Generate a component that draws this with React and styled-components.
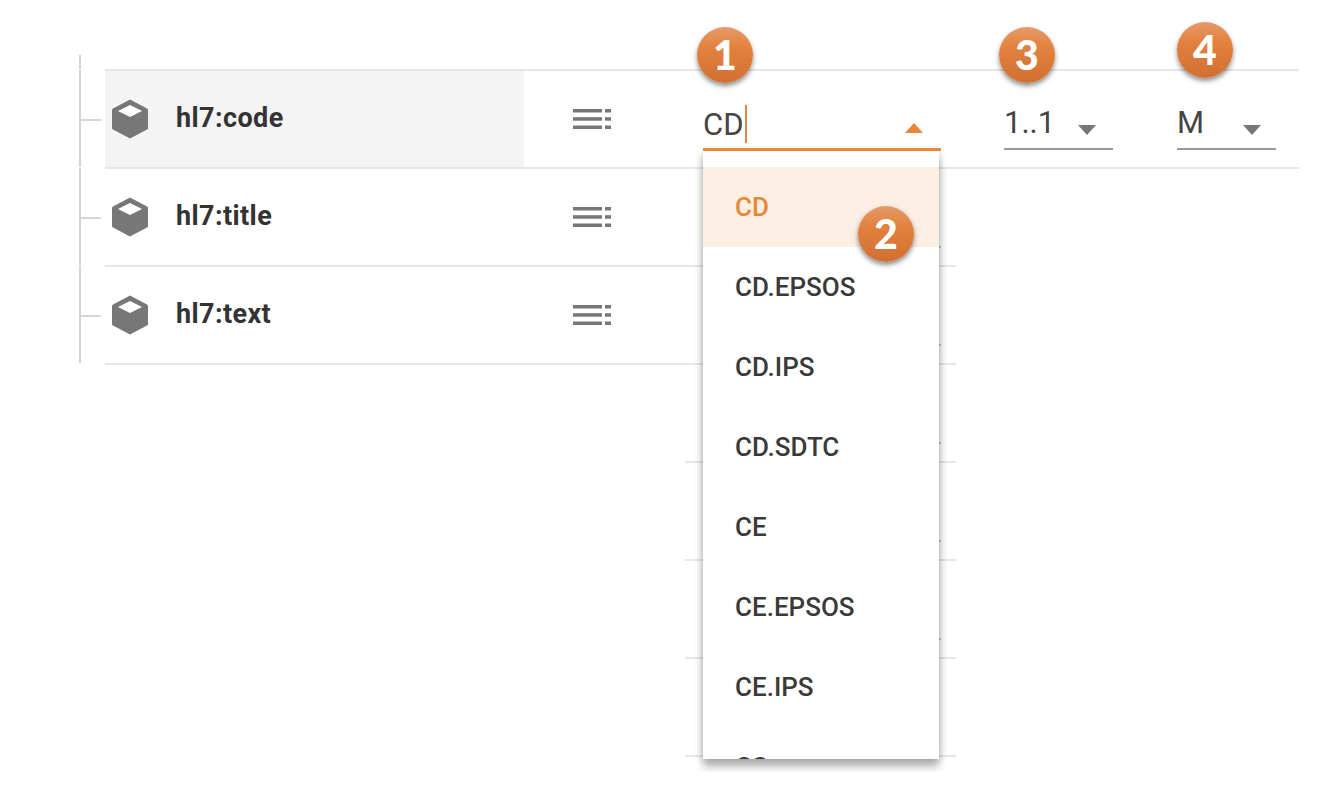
import React from 'react';
import styled, { createGlobalStyle } from 'styled-components';

const orange = '#e8873a';

const GlobalStyle = createGlobalStyle`
    html, body {
        margin: 0;
        background: #fff;
        font-family: Roboto, "Liberation Sans", sans-serif;
    }
`
const Tree = styled.div`
    display: flex;
    padding: 55px 0 0 79px;
    height: 737px;
    overflow: hidden;
`
const Rail = styled.div`
    display: flex;
    flex-direction: column;
    gap: 1px;
    width: 26px;
    flex: none;
`
const RailPiece = styled.div`
    height: ${props => props.$height}px;
    border-left: 2px solid #d3d3d3;
    display: flex;
    align-items: center;
`
const Tick = styled.div`
    width: 20px;
    height: 2px;
    margin-top: 2px;
    background: #d6d6d6;
`
const Rows = styled.div`
    margin-top: 14px;
    display: flex;
    flex-direction: column;
    flex: 1;
`
const Row = styled.div`
    position: relative;
    display: flex;
    height: 96px;
    width: ${props => props.$wide ? 1194 : 851}px;
    border-bottom: 2px solid #e6e6e6;
    border-top: ${props => props.$first ? '2px solid #e6e6e6' : 'none'};
`
const GhostRow = styled.div`
    position: relative;
    height: 96px;
    width: 271px;
    margin-left: 580px;
    border-bottom: 2px solid #e6e6e6;
`
const SideTick = styled.div`
    position: absolute;
    left: ${props => props.$left}px;
    bottom: 17px;
    width: 2px;
    height: 2px;
    background: #c4c4c4;
`
const NameCell = styled.div`
    width: 413px;
    padding-left: 6px;
    display: flex;
    align-items: center;
    gap: 27px;
    background: ${props => props.$active ? '#f4f4f4' : 'transparent'};
`
const Name = styled.span`
    font-size: 27px;
    font-weight: 700;
    letter-spacing: .4px;
    color: #333;
    position: relative;
    top: -1px;
`
const MenuButton = styled.div`
    margin-left: 49px;
    width: 38px;
    display: flex;
    align-items: center;
`
const Field = styled.div`
    position: relative;
    z-index: 2;
    box-sizing: border-box;
    height: ${props => props.$open ? 47 : 46}px;
    width: ${props => props.$width}px;
    margin: 33px 0 0 ${props => props.$gap}px;
    padding-right: ${props => props.$pad}px;
    border-bottom: ${props => props.$open ? `3px solid ${orange}` : '2px solid #9a9a9a'};
    display: flex;
    align-items: center;
    justify-content: space-between;
`
const Value = styled.div`
    display: flex;
    align-items: center;
    font-size: 31px;
    color: #444;
    position: relative;
    top: ${props => props.$top}px;
`
const Caret = styled.span`
    width: 2px;
    height: 38px;
    margin-left: 1px;
    background: ${orange};
`
const Arrow = styled.span`
    width: 0;
    height: 0;
    border-left: 9.5px solid transparent;
    border-right: 9.5px solid transparent;
    border-top: ${props => props.$up ? 'none' : '10px solid #777'};
    border-bottom: ${props => props.$up ? `10px solid ${orange}` : 'none'};
    position: relative;
    top: ${props => props.$up ? 2 : 4}px;
`
const Badge = styled.div`
    position: absolute;
    left: ${props => props.$left}px;
    top: ${props => props.$top}px;
    width: 56px;
    height: 56px;
    border-radius: 50%;
    background: linear-gradient(180deg, #e69a6a 0%, #e3823f 35%, #d06f31 100%);
    box-shadow: 0 3px 5px rgba(0, 0, 0, .45);
    color: #fff;
    font-family: Lato, "Open Sans", sans-serif;
    font-weight: 900;
    font-size: 41px;
    line-height: 56px;
    text-align: center;
    z-index: 3;
`
const Menu = styled.div`
    position: absolute;
    left: 0;
    top: calc(100% + 3px);
    width: 236px;
    height: 608px;
    padding-top: 16px;
    box-sizing: border-box;
    overflow: hidden;
    background: #fff;
    box-shadow: 0 0 8px rgba(0, 0, 0, .18), 0 8px 8px rgba(0, 0, 0, .28);
    clip-path: inset(0 -12px -13px -12px);
`
const MenuItem = styled.div`
    position: relative;
    box-sizing: border-box;
    height: 80px;
    padding: 0 0 1px 32px;
    display: flex;
    align-items: center;
    font-size: 26px;
    font-weight: 500;
    color: ${props => props.$selected ? orange : '#3a3a3a'};
    background: ${props => props.$selected ? '#fbefe4' : 'transparent'};
`

const CubeIcon = () => (
    <svg width="38" height="40" viewBox="0 0 38 40">
        <path d="M19 0.5 L36 9.5 Q37 10 37 11 V29 Q37 30 36 30.5 L19 39.5 L2 30.5 Q1 30 1 29 V11 Q1 10 2 9.5 Z" fill="#777" />
        <path d="M19 6 L31 12 L19 18 L7 12 Z" fill="#fff" />
    </svg>
)

const ListIcon = () => (
    <svg width="38" height="20" viewBox="0 0 38 20" fill="#777">
        <rect x="0" y="0" width="29" height="3.5" />
        <rect x="0" y="8.2" width="29" height="3.5" />
        <rect x="0" y="16.5" width="29" height="3.5" />
        <rect x="32" y="0" width="6" height="3.5" />
        <rect x="32" y="8.2" width="6" height="3.5" />
        <rect x="32" y="16.5" width="6" height="3.5" />
    </svg>
)

const options = ['CD', 'CD.EPSOS', 'CD.IPS', 'CD.SDTC', 'CE', 'CE.EPSOS', 'CE.IPS', 'CS'];
const sideTickLeft = 834;

const App = () => (
    <>
        <GlobalStyle />
        <Tree>
            <Rail>
                <RailPiece $height={14} />
                <RailPiece $height={97}><Tick /></RailPiece>
                <RailPiece $height={97}><Tick /></RailPiece>
                <RailPiece $height={97}><Tick /></RailPiece>
            </Rail>
            <Rows>
                <Row $wide $first>
                    <NameCell $active>
                        <CubeIcon />
                        <Name>hl7:code</Name>
                    </NameCell>
                    <MenuButton><ListIcon /></MenuButton>
                    <Field $width={238} $gap={92} $pad={18} $open>
                        <Badge $left={-6} $top={-77}>1</Badge>
                        <Value $top={-2}>CD<Caret /></Value>
                        <Arrow $up />
                        <Menu>
                            {options.map((option, i) => (
                                <MenuItem key={option} $selected={i === 0}>
                                    {option}
                                    {i === 0 && <Badge $left={155} $top={39}>2</Badge>}
                                </MenuItem>
                            ))}
                        </Menu>
                    </Field>
                    <Field $width={109} $gap={63} $pad={17}>
                        <Badge $left={-5} $top={-77}>3</Badge>
                        <Value $top={-4}>1..1</Value>
                        <Arrow />
                    </Field>
                    <Field $width={99} $gap={64} $pad={15}>
                        <Badge $left={0} $top={-82}>4</Badge>
                        <Value $top={-4}>M</Value>
                        <Arrow />
                    </Field>
                </Row>
                <Row>
                    <NameCell>
                        <CubeIcon />
                        <Name>hl7:title</Name>
                    </NameCell>
                    <MenuButton><ListIcon /></MenuButton>
                    <SideTick $left={sideTickLeft} />
                </Row>
                <Row>
                    <NameCell>
                        <CubeIcon />
                        <Name>hl7:text</Name>
                    </NameCell>
                    <MenuButton><ListIcon /></MenuButton>
                    <SideTick $left={sideTickLeft} />
                </Row>
                <GhostRow><SideTick $left={254} /></GhostRow>
                <GhostRow><SideTick $left={254} /></GhostRow>
                <GhostRow><SideTick $left={254} /></GhostRow>
                <GhostRow />
            </Rows>
        </Tree>
    </>
);

export default App;
